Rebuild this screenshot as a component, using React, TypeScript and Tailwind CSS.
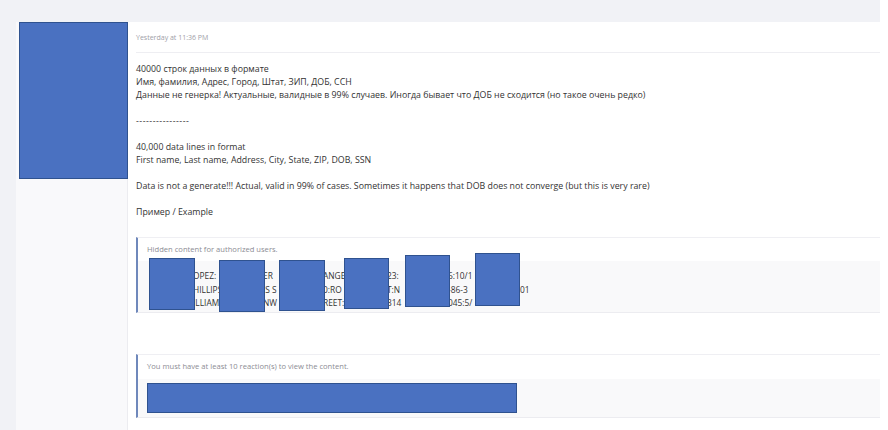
import React from "react";

const boxes = [
  { l: 11, t: 20, w: 46, h: 52 },
  { l: 81, t: 22, w: 46, h: 52 },
  { l: 141, t: 22, w: 46, h: 51 },
  { l: 206, t: 20, w: 45, h: 51 },
  { l: 267, t: 17, w: 45, h: 52 },
  { l: 337, t: 15, w: 45, h: 53 },
];

const rows = [
  ["", "OPEZ:", "ER", "ANGE", "23:", "6:10/1", ""],
  ["", "HILLIPS", "IS S", "0:RO", "T:N", "-86-3", "01"],
  ["", "ILLIAM", "NW", "REET:", "314", "045:5/", ""],
];
const widths = [46, 70, 60, 64, 61, 72, 40];

export default function App() {
  return (
    <div
      className="w-[888px] h-[430px] bg-white overflow-hidden text-[#333]"
      style={{ fontFamily: '"Open Sans", "Noto Sans", sans-serif' }}
    >
      <div className="w-[880px] h-[430px] bg-[#f1f2f6] pt-[22px] pl-[16px] flex">
        <div className="flex flex-1">
          {/* left user column */}
          <div className="w-[112px] bg-[#f9f9fb] border-r border-[#ececf0]">
            <div className="ml-[3px] w-[109px] h-[157px] bg-[#4a71c1] border-[1.5px] border-[#2f528f]" />
          </div>
          {/* main */}
          <div className="flex-1 bg-white flex flex-col">
            <div className="ml-[8px] h-[31px] border-b border-[#eeeef2] flex items-center pt-[3px]">
              <span className="text-[7px] text-[#a0a0a8]">Yesterday at 11:36 PM</span>
            </div>
            <div className="pl-[8px] pt-[10px] text-[8.8px] leading-[13px]">
              <div>40000 строк данных в формате</div>
              <div>Имя, фамилия, Адрес, Город, Штат, ЗИП, ДОБ, ССН</div>
              <div>Данные не генерка! Актуальные, валидные в 99% случаев. Иногда бывает что ДОБ не сходится (но такое очень редко)</div>
              <div>&nbsp;</div>
              <div className="tracking-[0.5px]">----------------</div>
              <div>&nbsp;</div>
              <div>40,000 data lines in format</div>
              <div>First name, Last name, Address, City, State, ZIP, DOB, SSN</div>
              <div>&nbsp;</div>
              <div>Data is not a generate!!! Actual, valid in 99% of cases. Sometimes it happens that DOB does not converge (but this is very rare)</div>
              <div>&nbsp;</div>
              <div>Пример / Example</div>
            </div>

            {/* hidden block 1 */}
            <div className="relative ml-[8px] mt-[18px] border-l-2 border-l-[#6f88bb] border-t border-t-[#efeff3] border-b border-b-[#ececf0]">
              <div className="h-[23px] pl-[9px] flex items-center text-[7.6px] text-[#8c8c94]">
                Hidden content for authorized users.
              </div>
              <div className="h-[51px] bg-[#f9f9fa] pl-[9px] pt-[8px] text-[8.4px] leading-[13.5px] text-[#333]">
                {rows.map((r, i) => (
                  <div key={i} className="flex whitespace-nowrap">
                    {r.map((c, j) => (
                      <div key={j} style={{ width: widths[j] }} className="shrink-0">
                        {c}
                      </div>
                    ))}
                  </div>
                ))}
              </div>
              {boxes.map((b, i) => (
                <div
                  key={i}
                  className="absolute bg-[#4a71c1] border-[1.5px] border-[#2f528f]"
                  style={{ left: b.l, top: b.t, width: b.w, height: b.h }}
                />
              ))}
            </div>

            {/* hidden block 2 */}
            <div className="ml-[8px] mt-[41px] border-l-2 border-l-[#6f88bb] border-t border-t-[#efeff3] border-b border-b-[#ececf0]">
              <div className="h-[24px] pl-[9px] flex items-center text-[7.6px] text-[#8c8c94]">
                You must have at least 10 reaction(s) to view the content.
              </div>
              <div className="h-[38px] bg-[#f9f9fa] pl-[9px] pt-[4px]">
                <div className="w-[370px] h-[30px] bg-[#4a71c1] border-[1.5px] border-[#2f528f]" />
              </div>
            </div>
          </div>
        </div>
      </div>
    </div>
  );
}
